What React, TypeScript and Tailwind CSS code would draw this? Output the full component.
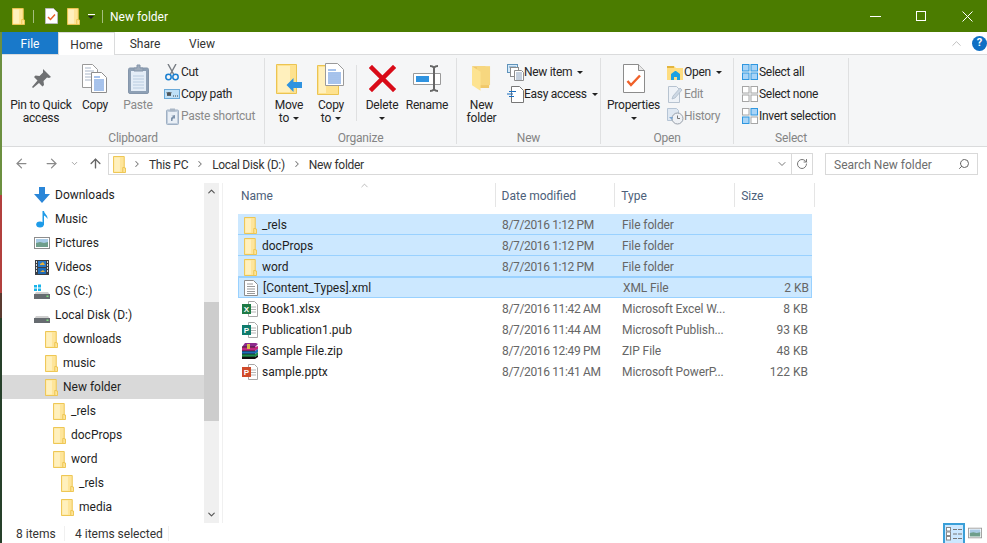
import type { ReactNode } from "react"
import { ArrowLeft, ArrowRight, ArrowUp, ChevronDown, ChevronUp, ChevronRight, RotateCw, Search } from "lucide-react"

function Folder() {
    return (
        <svg width="13" height="17" viewBox="0 0 14 17" preserveAspectRatio="none" className="shrink-0">
            <path d="M.5.5h11.6v11.5h1.4v4.500H.5z" fill="#fee59a" stroke="#edc550" />
            <path d="M1.5 1.5h6v14h-6z" fill="#fff0bd" />
            <path d="M10.5 16V11.5h2" fill="none" stroke="#edc550" />
        </svg>
    )
}

function Caret({ dim }: { dim?: boolean }) {
    return <span className={`inline-block w-0 h-0 border-x-[3px] border-x-transparent border-t-[3px] ${dim ? "border-t-[#777]" : "border-t-[#222]"}`} />
}

const PinIcon = () => (
    <svg width="22" height="22" viewBox="0 0 22 22">
        <path d="M13 1l8 8-2 1-2-.5-3.5 3.5.5 4-1.500 1.500-3.500-3.500L3 20l-1-1 5.500-6.500L4 9l1.500-1.500 4 .5L13 4.500z" fill="#6f7173" />
    </svg>
)

const CopyIcon = () => (
    <svg width="26" height="30" viewBox="0 0 26 30">
        <path d="M.5.5h10l5 5v18H.5z" fill="#fff" stroke="#9a9a9a" />
        <path d="M3 4h6M3 7h9M3 10h9M3 13h9M3 16h9" stroke="#a9b6c8" />
        <path d="M9.500 8.500h10l5 5v15h-15z" fill="#fff" stroke="#8d8d8d" />
        <path d="M12 13h6M12 16h10M12 18h10M12 20h10M12 22h10M12 24h10M12 26h10" stroke="#4f86d8" />
    </svg>
)

const PasteIcon = () => (
    <svg width="21" height="30" viewBox="0 0 21 30">
        <rect x=".5" y="4" width="20" height="25.500" rx="1.500" fill="#8ea0b5" stroke="#8596ab" />
        <path d="M3 7h15v20H3z" fill="#e4edf7" />
        <path d="M5 12h11M5 15h11M5 18h11M5 21h11M5 24h11" stroke="#b9cce0" />
        <path d="M6 7V4h3V1h3v3h3v3z" fill="#9eabbb" stroke="#8596ab" />
    </svg>
)

const CutIcon = () => (
    <svg width="14" height="17" viewBox="0 0 14 17">
        <path d="M3 0l5.500 10M11 0L5.500 10" stroke="#767b82" strokeWidth="1.400" fill="none" />
        <circle cx="3.500" cy="13" r="2.700" fill="none" stroke="#1a7fd0" strokeWidth="1.500" />
        <circle cx="10.500" cy="13" r="2.700" fill="none" stroke="#1a7fd0" strokeWidth="1.500" />
    </svg>
)

const CopyPathIcon = () => (
    <svg width="16" height="11" viewBox="0 0 16 11">
        <rect x=".5" y=".5" width="15" height="9" fill="#bfe0f7" stroke="#6aa9d8" />
        <path d="M3 3l1 4 1-4 1 4 1-4M9 7h1M11 7h1M13 7h1" stroke="#333" strokeWidth=".9" fill="none" />
    </svg>
)

const PasteShortcutIcon = () => (
    <svg width="13" height="17" viewBox="0 0 13 17">
        <rect x=".5" y="2" width="12" height="14.500" rx="1" fill="#c1cedd" stroke="#9fb0c4" />
        <path d="M2 4h9v11H2z" fill="#e9eff6" />
        <path d="M4 2V.5h5V2l.5 1.500h-6z" fill="#a9b6c5" />
        <path d="M5 13v-3l2-2H5l4-1v4l-1-1-1.500 1.500V13z" fill="#7e93ab" />
    </svg>
)

const MoveIcon = () => (
    <svg width="27" height="30" viewBox="0 0 27 30">
        <path d="M.5.5h20v29H.5z" fill="#fee28f" stroke="#ebc452" />
        <path d="M2 2h12v26H2z" fill="#fff0bd" />
        <path d="M10.500 22l7-7v4h8.500v6h-8.500v4z" fill="#2f93e0" transform="translate(0 -1)" />
    </svg>
)

const CopyToIcon = () => (
    <svg width="28" height="32" viewBox="0 0 28 32">
        <path d="M.5 2.500h21v29H.5z" fill="#fee28f" stroke="#ebc452" />
        <path d="M2 4h7v26H2z" fill="#fff0bd" />
        <path d="M8.500.5h12l6 6v16h-18z" fill="#fff" stroke="#9a9a9a" />
        <path d="M11 7h8M11 10h13M11 12h13M11 14h13M11 16h13M11 18h13M11 20h13" stroke="#4f86d8" />
    </svg>
)

const DeleteIcon = () => (
    <svg width="27" height="27" viewBox="0 0 27 27">
        <path d="M3 3l21 21M24 3L3 24" stroke="#d90b18" strokeWidth="4.500" strokeLinecap="square" />
    </svg>
)

const RenameIcon = () => (
    <svg width="29" height="27" viewBox="0 0 29 27">
        <path d="M.5 8.500h27v11H.5z" fill="#fff" stroke="#9a9a9a" />
        <path d="M3 11h13v6H3z" fill="#2f93e0" />
        <path d="M17 1c2 0 3 .5 4 1.500 1-1 2-1.500 4-1.500M17 26c2 0 3-.5 4-1.500 1 1 2 1.500 4 1.500M21 3v21" stroke="#666" strokeWidth="2" fill="none" />
    </svg>
)

const NewFolderIcon = () => (
    <svg width="19" height="27" viewBox="0 0 20 28">
        <path d="M0 1h14l1 3h3v20H7z" fill="#f0c869" />
        <path d="M5 1h14v20H5z" fill="#f7d77f" />
        <path d="M0 1l9 6v20l-9-6z" fill="#fde391" />
    </svg>
)

const NewItemIcon = () => (
    <svg width="17" height="17" viewBox="0 0 17 17">
        <rect x=".5" y=".5" width="10" height="8" fill="#d6eafa" stroke="#5f93ba" />
        <path d="M2 3h7" stroke="#5f93ba" />
        <rect x="3.500" y="3.500" width="8" height="9" fill="#fff" stroke="#8c8c8c" />
        <path d="M7.500 6.500h7l2 2v8h-9z" fill="#fff" stroke="#8c8c8c" />
        <path d="M9 9h6M9 11h6M9 13h6M9 15h6" stroke="#8aa0bb" />
    </svg>
)

const EasyIcon = () => (
    <svg width="17" height="17" viewBox="0 0 17 17">
        <path d="M4.500.5h8l4 4v12h-12z" fill="#fff" stroke="#777" />
        <path d="M2 5.500h7M0 8h6M2 10.500h5" stroke="#1a6ec0" strokeWidth="1.100" />
    </svg>
)

const PropertiesIcon = () => (
    <svg width="22" height="29" viewBox="0 0 22 29">
        <path d="M.5.500h15l6 6v22H.5z" fill="#fff" stroke="#8c8c8c" />
        <path d="M15.500.5v6h6" fill="#e8e8e8" stroke="#8c8c8c" />
        <path d="M4.500 17l3.500 4 9-9.500" stroke="#f0612a" strokeWidth="2.400" fill="none" />
    </svg>
)

const OpenIcon = () => (
    <svg width="17" height="15" viewBox="0 0 17 15">
        <path d="M0 1h7l2 2h7v12H0z" fill="#fedd80" />
        <path d="M0 1h7v2H0z" fill="#e3b53e" />
        <path d="M4 9l4-3h1l4 3v6h-3v-3H7v3H4z" fill="#1ba1e2" />
    </svg>
)

const EditIcon = () => (
    <svg width="15" height="17" viewBox="0 0 15 17">
        <path d="M.5.5h8l3 3v13H.5z" fill="#eef2f7" stroke="#b7c3d0" />
        <path d="M4 13l1-3 7-8 2 2-7 8z" fill="#cdd8e4" stroke="#a8b6c4" strokeWidth=".7" />
    </svg>
)

const HistoryIcon = () => (
    <svg width="17" height="17" viewBox="0 0 17 17">
        <path d="M.5.5h9l2 2v10H.5z" fill="#dfe8f2" stroke="#b5c4d5" />
        <circle cx="10.500" cy="10.500" r="5.500" fill="#eef1f5" stroke="#98a0aa" />
        <path d="M10.500 7.500v3h2.500" stroke="#777" fill="none" />
        <path d="M2 9l3 3 1-3z" fill="#7fa7cf" />
    </svg>
)

function Grid4({ on }: { on: boolean[] }) {
    return (
        <svg width="16" height="16" viewBox="0 0 16 16">
            {[[0, 0], [8.500, 0], [0, 8.500], [8.500, 8.500]].map(([x, y], i) => (
                <rect key={i} x={x + 0.5} y={y + 0.5} width="6.500" height="6.500" fill={on[i] ? "#a8d4f7" : "#fff"} stroke={on[i] ? "#2f97e0" : "#a6a6a6"} />
            ))}
        </svg>
    )
}

const DownloadIcon = () => (
    <svg width="16" height="16" viewBox="0 0 16 16">
        <path d="M5 0h6v7h5l-8 9-8-9h5z" fill="#2a86d8" />
    </svg>
)
const MusicIcon = () => (
    <svg width="12" height="17" viewBox="0 0 12 17">
        <ellipse cx="4" cy="13.500" rx="3.800" ry="3" fill="#1e9be8" />
        <path d="M6.500 0h1.500c.3 3 4 4 3.500 8-1-2-2.500-3-3.500-3.500V14H6.500z" fill="#1e9be8" />
    </svg>
)
const PicturesIcon = () => (
    <svg width="16" height="12" viewBox="0 0 16 12">
        <rect x=".5" y=".5" width="15" height="11" fill="#fff" stroke="#8d8d8d" />
        <path d="M2 2h12v4H2z" fill="#a9cbe6" />
        <path d="M2 6l4-1 4 1 4-1v5H2z" fill="#6f9e8b" />
    </svg>
)
const VideosIcon = () => (
    <svg width="14" height="15" viewBox="0 0 14 15">
        <rect width="14" height="15" fill="#3b3f44" />
        <path d="M1 1h1v2H1zM1 4h1v2H1zM1 7h1v2H1zM1 10h1v2H1zM12 1h1v2h-1zM12 4h1v2h-1zM12 7h1v2h-1zM12 10h1v2h-1z" fill="#ddd" />
        <path d="M3 1h8v6H3z" fill="#2a79c9" />
        <path d="M3 8h8v6H3z" fill="#1f6ab5" />
        <path d="M5 4l3-2 2 3H5zM5 12l3-2 2 2z" fill="#e9b13a" />
    </svg>
)
const DriveIcon = ({ win }: { win?: boolean }) => (
    <svg width="16" height="15" viewBox="0 0 16 15">
        {win && <path d="M0 1h3v2.500H0zM4 .5h3v3H4zM0 4.500h3V7H0zM4 4.500h3V7H4z" fill="#18b4ea" />}
        <path d="M2 8h12l2 3H0z" fill="#cfcfcf" />
        <rect y="10" width="16" height="5" fill="#666b70" />
        <rect x="12.500" y="11.500" width="2" height="1.500" fill="#7ee07e" />
    </svg>
)
const XmlIcon = () => (
    <svg width="14" height="16" viewBox="0 0 14 16">
        <path d="M.5.5h9l4 4v11H.5z" fill="#fff" stroke="#8c8c8c" />
        <path d="M3 4h6M3 6.500h8M3 9h8M3 11.500h8M3 13.500h8" stroke="#9a9a9a" />
    </svg>
)
function OfficeIcon({ color, letter }: { color: string; letter: string }) {
    return (
        <svg width="16" height="16" viewBox="0 0 16 16">
            <path d="M6.500.5h6l3 3v12h-9z" fill="#fff" stroke="#a8a8a8" />
            <path d="M9 6h5M9 8.500h5M9 11h5" stroke="#b5b5b5" />
            <rect y="3" width="9" height="10" fill={color} />
            <text x="4.500" y="11" textAnchor="middle" fontSize="8" fontWeight="700" fill="#fff" fontFamily="Liberation Sans, sans-serif">{letter}</text>
        </svg>
    )
}
const ZipIcon = () => (
    <svg width="16" height="16" viewBox="0 0 16 16">
        <path d="M3 0h11l2 1-3 3H0z" fill="#8e2a8e" />
        <path d="M0 4h13l3-1v3l-3 2H0z" fill="#c0287f" />
        <path d="M0 8h13l3-2v3l-3 2H0z" fill="#1d6fb8" />
        <path d="M0 11h13l3-2v3l-3 2H0z" fill="#1f8f4d" />
        <path d="M0 14h13l3-2v2l-3 2H0z" fill="#111" />
        <path d="M0 4h13M0 8h13M0 11h13M0 14h13" stroke="#111" strokeWidth=".7" />
        <rect x="5" y="1" width="3" height="5" fill="#d9b84a" />
    </svg>
)

function Large({ icon, w, lines, dim, caret, className = "" }: { icon: ReactNode; w: string; lines: string[]; dim?: boolean; caret?: boolean; className?: string }) {
    return (
        <div className={`${w} ${className} flex flex-col items-center ${dim ? "text-[#8a8a8a]" : "text-[#252525]"}`}>
            <div className="h-[41px] flex items-center justify-center">{icon}</div>
            {lines.map((l, i) => (
                <div key={l} className="h-[13px] leading-[13px] whitespace-nowrap">
                    {l}
                    {caret && i === lines.length - 1 && lines.length > 1 && <span className="ml-[4px] relative top-[-2px]"><Caret /></span>}
                </div>
            ))}
            {caret && lines.length === 1 && <div className="h-[13px] leading-[13px] flex items-center"><Caret /></div>}
        </div>
    )
}

function Small({ icon, label, dim, caret }: { icon: ReactNode; label: string; dim?: boolean; caret?: boolean }) {
    return (
        <div className={`h-[22px] flex items-center whitespace-nowrap ${dim ? "text-[#8a8a8a]" : "text-[#252525]"}`}>
            <div className="w-[18px] flex justify-center">{icon}</div>
            <span className="tracking-[-0.3px]">{label}</span>
            {caret && <span className="ml-[5px] flex"><Caret /></span>}
        </div>
    )
}

function Group({ w, label, children }: { w: string; label: string; children: ReactNode }) {
    return (
        <div className={`${w} h-[86px] border-r border-[#dfe0e1] flex flex-col shrink-0`}>
            <div className="h-[70px] flex">{children}</div>
            <div className="h-[16px] leading-[20px] text-center text-[#848484]">{label}</div>
        </div>
    )
}

const navItems: { label: string; icon: ReactNode; indent: string; active?: boolean; folder?: boolean }[] = [
    { label: "Downloads", icon: <DownloadIcon />, indent: "pl-[32px]" },
    { label: "Music", icon: <MusicIcon />, indent: "pl-[32px]" },
    { label: "Pictures", icon: <PicturesIcon />, indent: "pl-[32px]" },
    { label: "Videos", icon: <VideosIcon />, indent: "pl-[32px]" },
    { label: "OS (C:)", icon: <DriveIcon win />, indent: "pl-[32px]" },
    { label: "Local Disk (D:)", icon: <DriveIcon />, indent: "pl-[32px]" },
    { label: "downloads", icon: <Folder />, indent: "pl-[41px]", folder: true },
    { label: "music", icon: <Folder />, indent: "pl-[41px]", folder: true },
    { label: "New folder", icon: <Folder />, indent: "pl-[41px]", active: true, folder: true },
    { label: "_rels", icon: <Folder />, indent: "pl-[49px]", folder: true },
    { label: "docProps", icon: <Folder />, indent: "pl-[49px]", folder: true },
    { label: "word", icon: <Folder />, indent: "pl-[49px]", folder: true },
    { label: "_rels", icon: <Folder />, indent: "pl-[57px]", folder: true },
    { label: "media", icon: <Folder />, indent: "pl-[57px]", folder: true },
]

const files: { name: string; date: string; type: string; size: string; icon: ReactNode; selected?: boolean; focus?: boolean }[] = [
    { name: "_rels", date: "8/7/2016 1:12 PM", type: "File folder", size: "", icon: <Folder />, selected: true },
    { name: "docProps", date: "8/7/2016 1:12 PM", type: "File folder", size: "", icon: <Folder />, selected: true },
    { name: "word", date: "8/7/2016 1:12 PM", type: "File folder", size: "", icon: <Folder />, selected: true },
    { name: "[Content_Types].xml", date: "", type: "XML File", size: "2 KB", icon: <XmlIcon />, selected: true, focus: true },
    { name: "Book1.xlsx", date: "8/7/2016 11:42 AM", type: "Microsoft Excel W...", size: "8 KB", icon: <OfficeIcon color="#1f7a45" letter="X" /> },
    { name: "Publication1.pub", date: "8/7/2016 11:44 AM", type: "Microsoft Publish...", size: "93 KB", icon: <OfficeIcon color="#0f7b6c" letter="P" /> },
    { name: "Sample File.zip", date: "8/7/2016 12:49 PM", type: "ZIP File", size: "48 KB", icon: <ZipIcon /> },
    { name: "sample.pptx", date: "8/7/2016 11:41 AM", type: "Microsoft PowerP...", size: "122 KB", icon: <OfficeIcon color="#d04a2a" letter="P" /> },
]

export default function App() {
    return (
        <div className="w-[987px] h-[543px] overflow-hidden bg-white flex flex-col text-[12px] text-[#1e1e1e] font-['Roboto','Noto_Sans',sans-serif]">
            {/* title bar */}
            <div className="h-[32px] shrink-0 bg-[#4b7c00] flex items-center text-white">
                <div className="w-[12px]" />
                <Folder />
                <div className="ml-[8px] w-px h-[13px] bg-[#a5be80]" />
                <div className="ml-[11px] flex"><svg width="13" height="16" viewBox="0 0 13 16"><path d="M.5.5h8l4 4v11H.5z" fill="#fff" stroke="#bbb" /><path d="M3 9l2.500 2.500L10 6.500" stroke="#e8602a" strokeWidth="1.500" fill="none" /></svg></div>
                <div className="ml-[9px]"><Folder /></div>
                <div className="ml-[7px] flex flex-col items-center gap-[1px] w-[8px]"><div className="w-[7px] h-px bg-white" /><Caret /></div>
                <div className="ml-[7px] w-px h-[13px] bg-[#a5be80]" />
                <div className="ml-[7px] pt-[1px] whitespace-nowrap">New folder</div>
                <div className="ml-auto flex items-center -mr-[3px]">
                    <div className="w-[46px] flex justify-center"><svg width="11" height="11" viewBox="0 0 11 11"><path d="M0 5.500h11" stroke="#fff" /></svg></div>
                    <div className="w-[46px] flex justify-center"><svg width="10" height="10" viewBox="0 0 10 10"><rect x=".5" y=".5" width="9" height="9" fill="none" stroke="#fff" /></svg></div>
                    <div className="w-[46px] flex justify-center"><svg width="11" height="11" viewBox="0 0 11 11"><path d="M.5.500l10 10M10.500.500l-10 10" stroke="#fff" fill="none" /></svg></div>
                </div>
            </div>

            <div className="flex flex-1 min-h-0">
                {/* background window peeking out on the left */}
                <div className="w-[2px] shrink-0 flex flex-col">
                    <div className="h-[163px] bg-[#6c9040]" />
                    <div className="h-[98px] bg-[#b2403e]" />
                    <div className="h-[25px] bg-[#5a3a30]" />
                    <div className="flex-1 bg-[#26402a]" />
                </div>

                <div className="flex-1 min-w-0 flex flex-col">
                    {/* tabs */}
                    <div className="h-[23px] shrink-0 flex border-b border-[#dadbdc] relative">
                        <div className="w-[56px] bg-[#1979ca] text-white flex items-center justify-center pt-[1px]">File</div>
                        <div className="w-[57px] h-[23px] border-x border-t border-[#dadbdc] bg-white flex items-center justify-center text-[#333] pt-[1px]">Home</div>
                        <div className="w-[60px] flex items-center justify-center text-[#333] pt-[1px]">Share</div>
                        <div className="w-[54px] flex items-center justify-center text-[#333] pt-[1px]">View</div>
                        <div className="ml-auto flex items-center">
                            <ChevronUp size={15} strokeWidth={1} className="text-[#9a9a9a] mr-[8px]" />
                            <div className="w-[15px] h-[15px] rounded-full bg-[#0e6fc4] text-white text-[11px] font-bold flex items-center justify-center">?</div>
                        </div>
                    </div>

                    {/* ribbon */}
                    <div className="h-[92px] shrink-0 bg-[#f5f6f7] border-b border-[#dadbdc] flex pt-[3px] text-[#252525] tracking-[-0.2px]">
                        <Group w="w-[263px]" label="Clipboard">
                            <Large icon={<PinIcon />} w="w-[78px]" lines={["Pin to Quick", "access"]} />
                            <Large icon={<CopyIcon />} w="w-[30px]" lines={["Copy"]} />
                            <Large icon={<PasteIcon />} w="w-[50px]" className="ml-[3px]" lines={["Paste"]} dim />
                            <div className="flex flex-col mt-[3px]">
                                <Small icon={<CutIcon />} label="Cut" />
                                <Small icon={<CopyPathIcon />} label="Copy path" />
                                <Small icon={<PasteShortcutIcon />} label="Paste shortcut" dim />
                            </div>
                        </Group>
                        <Group w="w-[192px]" label="Organize">
                            <div className="w-[4px]" />
                            <Large icon={<MoveIcon />} w="w-[40px]" lines={["Move", "to"]} caret />
                            <Large icon={<CopyToIcon />} w="w-[44px]" lines={["Copy", "to"]} caret />
                            <div className="w-px h-[56px] mt-[7px] mx-[3px] bg-[#dfe0e1]" />
                            <Large icon={<DeleteIcon />} w="w-[44px]" lines={["Delete"]} caret />
                            <Large icon={<RenameIcon />} w="w-[46px]" lines={["Rename"]} />
                        </Group>
                        <Group w="w-[144px]" label="New">
                            <Large icon={<NewFolderIcon />} w="w-[49px]" lines={["New", "folder"]} />
                            <div className="flex flex-col mt-[3px]">
                                <Small icon={<NewItemIcon />} label="New item" caret />
                                <Small icon={<EasyIcon />} label="Easy access" caret />
                            </div>
                        </Group>
                        <Group w="w-[133px]" label="Open">
                            <Large icon={<PropertiesIcon />} w="w-[65px]" lines={["Properties"]} caret />
                            <div className="flex flex-col mt-[3px]">
                                <Small icon={<OpenIcon />} label="Open" caret />
                                <Small icon={<EditIcon />} label="Edit" dim />
                                <Small icon={<HistoryIcon />} label="History" dim />
                            </div>
                        </Group>
                        <Group w="w-[115px]" label="Select">
                            <div className="pl-[7px] flex flex-col mt-[3px]">
                                <Small icon={<Grid4 on={[true, true, true, true]} />} label="Select all" />
                                <Small icon={<Grid4 on={[false, false, false, false]} />} label="Select none" />
                                <Small icon={<Grid4 on={[false, true, true, false]} />} label="Invert selection" />
                            </div>
                        </Group>
                    </div>

                    {/* address bar */}
                    <div className="h-[29px] shrink-0 flex items-start pt-[6px] text-[#333]">
                        <div className="w-[106px] h-[21px] flex items-center text-[#8a8a8a]">
                            <ArrowLeft size={15} strokeWidth={2} className="ml-[12px]" />
                            <ArrowRight size={15} strokeWidth={2} className="ml-[15px]" />
                            <ChevronDown size={9} strokeWidth={2} className="ml-[11px]" />
                            <ArrowUp size={15} strokeWidth={2.200} className="ml-[9px] text-[#666]" />
                        </div>
                        <div className="w-[705px] h-[22px] border border-[#d9d9d9] flex items-center tracking-[-0.3px]">
                            <div className="ml-[4px]"><Folder /></div>
                            <ChevronRight size={10} strokeWidth={2.500} className="ml-[6px] text-[#777]" />
                            <span className="ml-[7px] pt-[1px]">This PC</span>
                            <ChevronRight size={10} strokeWidth={2.500} className="ml-[7px] text-[#777]" />
                            <span className="ml-[7px] pt-[1px]">Local Disk (D:)</span>
                            <ChevronRight size={10} strokeWidth={2.500} className="ml-[7px] text-[#777]" />
                            <span className="ml-[7px] pt-[1px]">New folder</span>
                            <ChevronDown size={12} strokeWidth={2} className="ml-auto mr-[3px] text-[#777]" />
                            <div className="w-[21px] h-full border-l border-[#d9d9d9] flex items-center justify-center"><RotateCw size={12} strokeWidth={2} className="text-[#777]" /></div>
                        </div>
                        <div className="ml-[12px] w-[153px] h-[22px] border border-[#d9d9d9] flex items-center pl-[8px] pr-[7px] text-[#6d6d6d]">
                            <span className="pt-[2px]">Search New folder</span>
                            <Search size={12} strokeWidth={2} className="ml-auto text-[#666] -scale-x-100" />
                        </div>
                    </div>

                    {/* main */}
                    <div className="flex-1 min-h-0 flex pt-[7px]">
                        {/* nav */}
                        <div className="w-[202px] shrink-0 flex flex-col">
                            {navItems.map((n, i) => (
                                <div key={i} className={`h-[24px] flex items-center shrink-0 ${n.indent} ${n.active ? "bg-[#d9d9d9]" : ""}`}>
                                    <div className="w-[16px] flex justify-center">{n.icon}</div>
                                    <span className={`${n.folder ? "ml-[4px]" : "ml-[5px]"} whitespace-nowrap`}>{n.label}</span>
                                </div>
                            ))}
                        </div>
                        {/* scrollbar */}
                        <div className="w-[15px] h-[340px] bg-[#f0f0f0] flex flex-col items-center shrink-0">
                            <div className="h-[17px] flex items-center"><ChevronUp size={11} strokeWidth={2.500} className="text-[#555]" /></div>
                            <div className="mt-[102px] w-full h-[119px] bg-[#cdcdcd]" />
                            <div className="mt-auto h-[17px] flex items-center"><ChevronDown size={11} strokeWidth={2.500} className="text-[#555]" /></div>
                        </div>
                        <div className="ml-[3px] w-px h-[340px] bg-[#f0f0f0]" />
                        {/* list */}
                        <div className="ml-[15px] w-[577px] shrink-0">
                            <div className="h-[24px] flex items-center text-[#4c607a] relative">
                                <ChevronUp size={11} strokeWidth={1.200} className="absolute left-[121px] -top-[3px] text-[#888]" />
                                <div className="w-[258px] pl-[3px] h-[24px] leading-[26px] border-r border-[#e5e5e5]">Name</div>
                                <div className="w-[120px] pl-[6px] h-[24px] leading-[26px] border-r border-[#e5e5e5]">Date modified</div>
                                <div className="w-[120px] pl-[6px] h-[24px] leading-[26px] border-r border-[#e5e5e5]">Type</div>
                                <div className="w-[80px] pl-[6px] h-[24px] leading-[26px] border-r border-[#e5e5e5]">Size</div>
                            </div>
                            <div className="mt-[7px] w-[574px]">
                                {files.map((f) => (
                                    <div key={f.name} className={`h-[21px] flex items-center ${f.selected ? "bg-[#cce8ff] border-b border-[#99d1ff]" : ""} ${f.selected && !f.focus ? "pt-[2px]" : "pt-[1px]"} ${f.focus ? "border-t border-x" : ""}`}>
                                        <div className="w-[21px] pl-[3px] flex justify-center shrink-0">{f.icon}</div>
                                        <div className="w-[238px] pl-[3px] whitespace-nowrap text-[#1e1e1e]">{f.name}</div>
                                        <div className="w-[120px] pl-[5px] whitespace-nowrap text-[#666] tracking-[-0.35px]">{f.date}</div>
                                        <div className="w-[120px] pl-[5px] whitespace-nowrap text-[#666] tracking-[-0.1px]">{f.type}</div>
                                        <div className="w-[73px] pr-[2px] text-right whitespace-nowrap text-[#666]">{f.size}</div>
                                    </div>
                                ))}
                            </div>
                        </div>
                    </div>

                    {/* status bar */}
                    <div className="h-[20px] shrink-0 flex items-center text-[#333]">
                        <div className="w-[63px] pl-[14px] border-r border-[#f0f0f0] h-[15px] leading-[17px]">8 items</div>
                        <div className="pl-[10px] w-[104px] border-r border-[#f0f0f0] h-[15px] leading-[17px] whitespace-nowrap">4 items selected</div>
                        <div className="ml-auto flex items-center mr-[5px] gap-[3px]">
                            <div className="w-[22px] h-[20px] bg-[#cce8ff] border-2 border-b-0 border-[#3a9fd8] flex items-center justify-center gap-[1px]">
                                <svg width="16" height="14" viewBox="0 0 16 14"><rect x=".5" y=".5" width="4" height="3.500" fill="#fff" stroke="#888" /><rect x=".5" y="5" width="4" height="3.500" fill="#fff" stroke="#888" /><rect x=".5" y="9.500" width="4" height="3.500" fill="#fff" stroke="#888" /><path d="M7 2.500h4M12 2.500h4M7 7h4M12 7h4M7 11.500h4M12 11.500h4" stroke="#777" /></svg>
                            </div>
                            <svg width="14" height="12" viewBox="0 0 16 12"><rect x=".5" y=".5" width="15" height="11" fill="#fff" stroke="#999" /><path d="M2 2h12v4H2z" fill="#a9cbe6" /><path d="M2 6l4-1 4 1 4-1v5H2z" fill="#6f9e8b" /></svg>
                        </div>
                    </div>
                </div>
            </div>
        </div>
    )
}
